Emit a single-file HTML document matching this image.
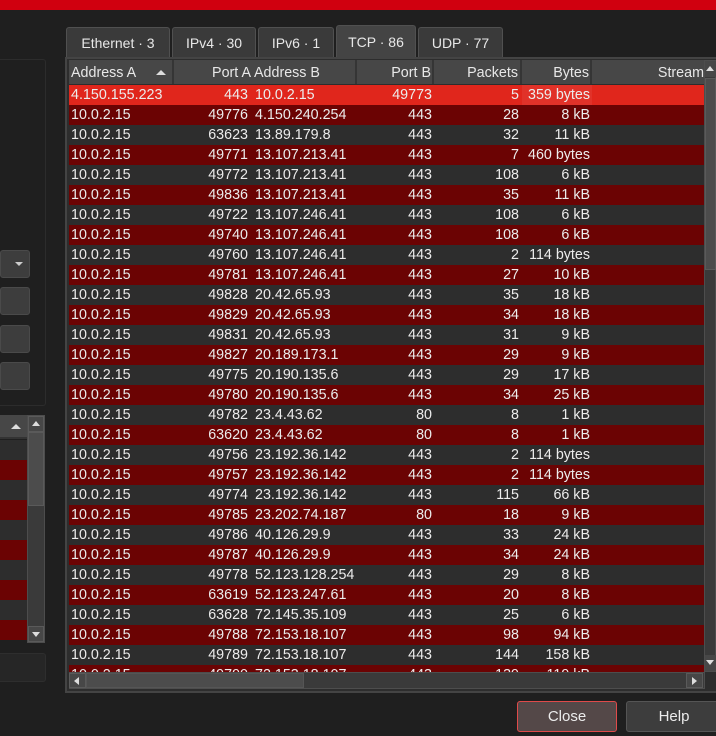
<!DOCTYPE html>
<html><head><meta charset="utf-8"><style>
*{box-sizing:border-box;margin:0;padding:0}
body{width:716px;height:736px;background:#1f1f1f;position:relative;overflow:hidden;font-family:"Liberation Sans",sans-serif;font-size:14.3px;color:#ececec}
.a{position:absolute}
.tab{position:absolute;top:27px;height:30px;background:#3a3a3a;border:1px solid #505050;border-bottom:none;border-radius:3px 3px 0 0;text-align:center;line-height:30px;font-size:14px;color:#e8e8e8}
.row{position:absolute;left:69px;width:636px;height:20px;line-height:20px;white-space:nowrap}
.row span{position:absolute;top:0}
.hd{position:absolute;top:60px;height:24px;background:#474747;border-right:2px solid #353535;line-height:26px;color:#e8e8e8}
.btn{position:absolute;left:0;width:30px;height:28px;background:#3d3d3d;border:1px solid #4a4a4a;border-radius:3px}
</style></head><body>
<div class="a" style="left:0;top:0;width:716px;height:10px;background:#d0000f"></div>

<div class="a" style="left:0;top:59px;width:46px;height:347px;border:1px solid #2c2c2c;border-left:none;border-radius:0 3px 3px 0"></div>
<div class="btn" style="top:250px"><div class="a" style="left:14px;top:11px;border:4px solid transparent;border-top:4px solid #ccc;border-bottom:none"></div></div>
<div class="btn" style="top:287px"></div>
<div class="btn" style="top:325px"></div>
<div class="btn" style="top:362px"></div>

<div class="a" style="left:0;top:415px;width:27px;height:24px;background:#474747;border-bottom:2px solid #333"><div class="a" style="left:11px;top:9px;border:5px solid transparent;border-bottom:5px solid #ddd;border-top:none"></div></div>
<div class="a" style="left:0;top:440px;width:27px;height:200px;background:repeating-linear-gradient(#2d2d2d 0 20px,#6b0303 20px 40px)"></div>
<div class="a" style="left:27px;top:415px;width:18px;height:228px;background:#3a3a3a;border:1px solid #4d4d4d"></div>
<div class="a" style="left:28px;top:416px;width:16px;height:16px;background:#474747;border:1px solid #5a5a5a"><div class="a" style="left:3px;top:4px;border:4px solid transparent;border-bottom:5px solid #ddd;border-top:none"></div></div>
<div class="a" style="left:28px;top:432px;width:16px;height:74px;background:#4c4c4c;border:1px solid #5a5a5a"></div>
<div class="a" style="left:28px;top:626px;width:16px;height:16px;background:#474747;border:1px solid #5a5a5a"><div class="a" style="left:3px;top:5px;border:4px solid transparent;border-top:5px solid #ddd;border-bottom:none"></div></div>
<div class="a" style="left:0;top:653px;width:46px;height:29px;background:#262626;border:1px solid #2e2e2e;border-left:none;border-radius:0 3px 3px 0"></div>

<div class="tab" style="left:66px;width:104px">Ethernet · 3</div>
<div class="tab" style="left:172px;width:84px">IPv4 · 30</div>
<div class="tab" style="left:258px;width:76px">IPv6 · 1</div>
<div class="tab" style="left:336px;top:25px;height:33px;width:80px;background:#444;line-height:33px">TCP · 86</div>
<div class="tab" style="left:418px;width:85px">UDP · 77</div>

<div class="a" style="left:65px;top:57px;width:651px;height:636px;background:#2d2d2d;border:2px solid #444;border-right:none"></div>
<div class="hd" style="left:69px;width:105px;padding-left:2px">Address A<div class="a" style="left:87px;top:10px;border:5px solid transparent;border-bottom:5px solid #ddd;border-top:none"></div></div>
<div class="hd" style="left:174px;width:77px;text-align:right;border-right:none">Port A</div>
<div class="hd" style="left:251px;width:106px;padding-left:3px">Address B</div>
<div class="hd" style="left:357px;width:77px;text-align:right;padding-right:1px">Port B</div>
<div class="hd" style="left:434px;width:88px;text-align:right;padding-right:2px">Packets</div>
<div class="hd" style="left:522px;width:70px;text-align:right;padding-right:1px">Bytes</div>
<div class="hd" style="left:592px;width:113px;text-align:right;border-right:none;padding-right:1px">Stream</div>

<div class="a" style="left:69px;top:85px;width:636px;height:587px;overflow:hidden">
<div id="rows"></div>
</div>
<script>
var d=[["4.150.155.223",443,"10.0.2.15",49773,5,"359 bytes"],["10.0.2.15",49776,"4.150.240.254",443,28,"8 kB"],["10.0.2.15",63623,"13.89.179.8",443,32,"11 kB"],["10.0.2.15",49771,"13.107.213.41",443,7,"460 bytes"],["10.0.2.15",49772,"13.107.213.41",443,108,"6 kB"],["10.0.2.15",49836,"13.107.213.41",443,35,"11 kB"],["10.0.2.15",49722,"13.107.246.41",443,108,"6 kB"],["10.0.2.15",49740,"13.107.246.41",443,108,"6 kB"],["10.0.2.15",49760,"13.107.246.41",443,2,"114 bytes"],["10.0.2.15",49781,"13.107.246.41",443,27,"10 kB"],["10.0.2.15",49828,"20.42.65.93",443,35,"18 kB"],["10.0.2.15",49829,"20.42.65.93",443,34,"18 kB"],["10.0.2.15",49831,"20.42.65.93",443,31,"9 kB"],["10.0.2.15",49827,"20.189.173.1",443,29,"9 kB"],["10.0.2.15",49775,"20.190.135.6",443,29,"17 kB"],["10.0.2.15",49780,"20.190.135.6",443,34,"25 kB"],["10.0.2.15",49782,"23.4.43.62",80,8,"1 kB"],["10.0.2.15",63620,"23.4.43.62",80,8,"1 kB"],["10.0.2.15",49756,"23.192.36.142",443,2,"114 bytes"],["10.0.2.15",49757,"23.192.36.142",443,2,"114 bytes"],["10.0.2.15",49774,"23.192.36.142",443,115,"66 kB"],["10.0.2.15",49785,"23.202.74.187",80,18,"9 kB"],["10.0.2.15",49786,"40.126.29.9",443,33,"24 kB"],["10.0.2.15",49787,"40.126.29.9",443,34,"24 kB"],["10.0.2.15",49778,"52.123.128.254",443,29,"8 kB"],["10.0.2.15",63619,"52.123.247.61",443,20,"8 kB"],["10.0.2.15",63628,"72.145.35.109",443,25,"6 kB"],["10.0.2.15",49788,"72.153.18.107",443,98,"94 kB"],["10.0.2.15",49789,"72.153.18.107",443,144,"158 kB"],["10.0.2.15",49790,"72.153.18.107",443,139,"119 kB"]];
var h="";d.forEach(function(r,i){var bg=i==0?"#e0261c":(i%2?"#6b0303":"#2d2d2d");
h+='<div class="row" style="left:0;top:'+(i*20)+'px;background:'+bg+'"><span style="left:2px">'+r[0]+'</span><span style="right:457px">'+r[1]+'</span><span style="left:186px">'+r[2]+'</span><span style="right:273px">'+r[3]+'</span><span style="right:186px">'+r[4]+'</span><span style="right:115px">'+r[5]+'</span>'+(i==0?'<div class="a" style="left:453px;top:0;width:70px;height:20px;background:rgba(255,255,255,0.06)"></div>':'')+'</div>';});
document.getElementById("rows").innerHTML=h;
</script>

<div class="a" style="left:69px;top:672px;width:636px;height:17px;background:#3a3a3a;border:1px solid #4d4d4d"></div>
<div class="a" style="left:69px;top:673px;width:17px;height:15px;background:#474747;border:1px solid #5a5a5a"><div class="a" style="left:4px;top:3px;border:4px solid transparent;border-right:5px solid #ddd;border-left:none"></div></div>
<div class="a" style="left:86px;top:673px;width:218px;height:15px;background:#4c4c4c;border:1px solid #555"></div>
<div class="a" style="left:686px;top:673px;width:17px;height:15px;background:#474747;border:1px solid #5a5a5a"><div class="a" style="left:5px;top:3px;border:4px solid transparent;border-left:5px solid #ddd;border-right:none"></div></div>

<div class="a" style="left:704px;top:60px;width:12px;height:612px;background:#3a3a3a;border:1px solid #4d4d4d"></div>
<div class="a" style="left:705px;top:61px;width:11px;height:16px;background:#474747"><div class="a" style="left:1px;top:5px;border:4px solid transparent;border-bottom:5px solid #ddd;border-top:none"></div></div>
<div class="a" style="left:705px;top:78px;width:11px;height:192px;background:#4c4c4c;border:1px solid #5a5a5a"></div>
<div class="a" style="left:705px;top:655px;width:11px;height:16px;background:#474747"><div class="a" style="left:1px;top:5px;border:4px solid transparent;border-top:5px solid #ddd;border-bottom:none"></div></div>

<div class="a" style="left:517px;top:701px;width:100px;height:31px;background:#544848;border:1px solid #e04a4a;border-radius:3px;text-align:center;line-height:29px;font-size:15px">Close</div>
<div class="a" style="left:626px;top:701px;width:96px;height:31px;background:#3d3d3d;border:1px solid #555;border-radius:3px;text-align:center;line-height:29px;font-size:15px">Help</div>
</body></html>
